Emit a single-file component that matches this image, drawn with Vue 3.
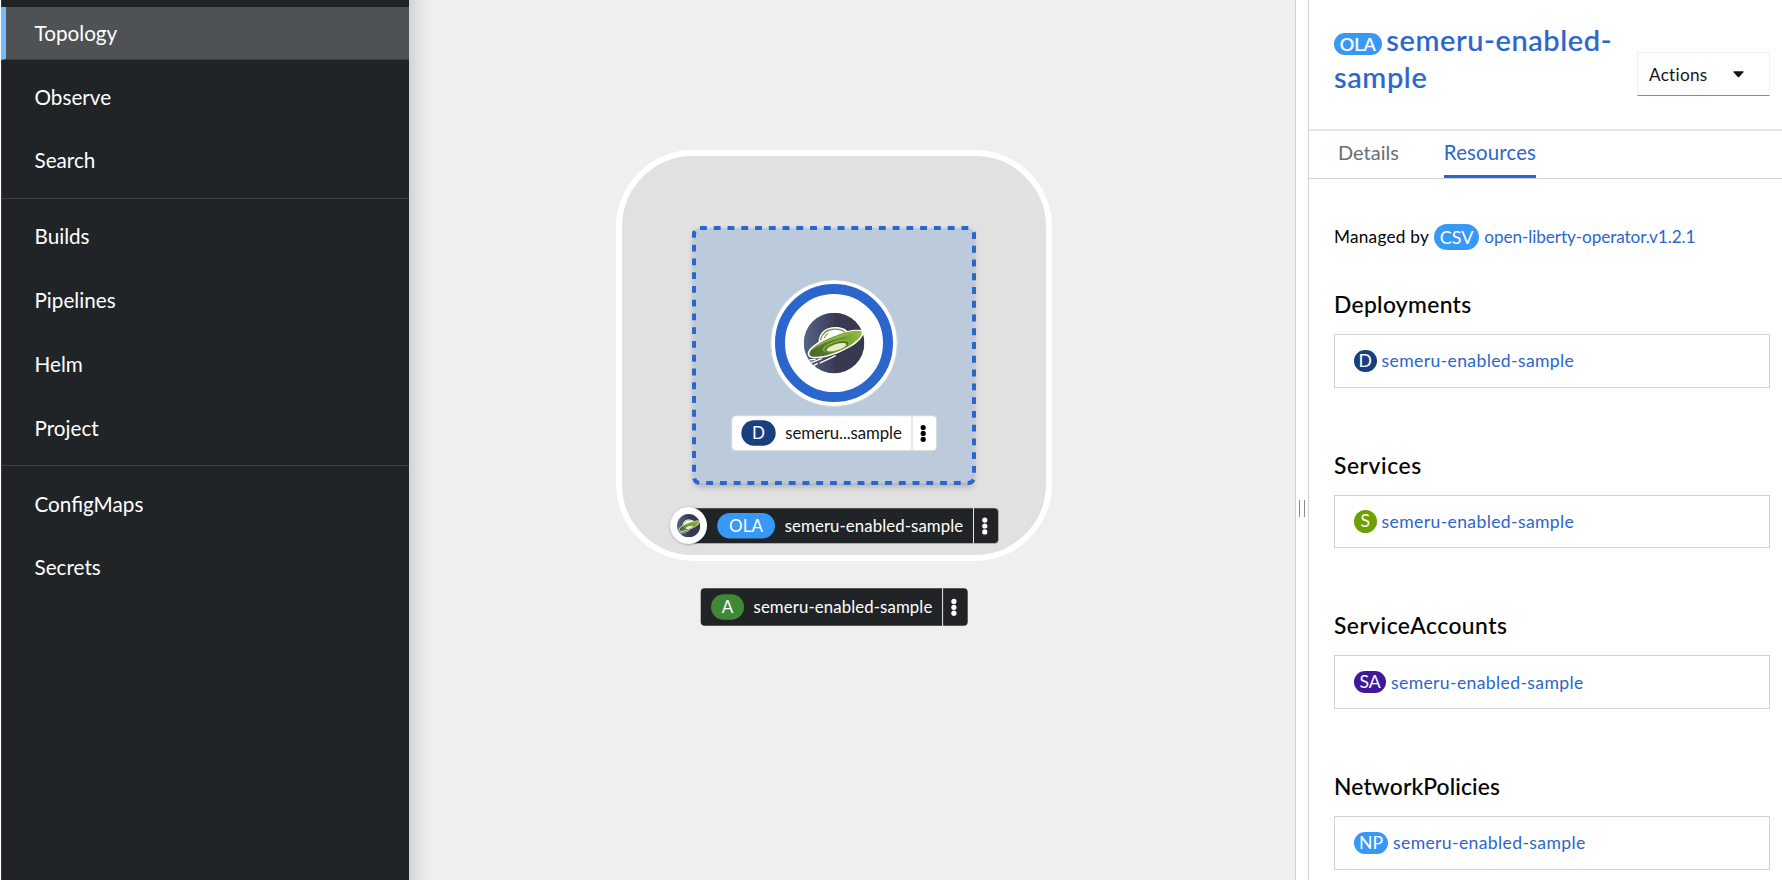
<script setup>
const navSections = [
  [{ label: 'Topology', active: true }, { label: 'Observe' }, { label: 'Search' }],
  [{ label: 'Builds' }, { label: 'Pipelines' }, { label: 'Helm' }, { label: 'Project' }],
  [{ label: 'ConfigMaps' }, { label: 'Secrets' }],
]

const resources = [
  { title: 'Deployments', badge: 'D', kind: 'deployment' },
  { title: 'Services', badge: 'S', kind: 'service' },
  { title: 'ServiceAccounts', badge: 'SA', kind: 'account' },
  { title: 'NetworkPolicies', badge: 'NP', kind: 'policy' },
]
</script>

<template>
  <div class="app">
    <nav class="sidebar">
      <ul v-for="(section, i) in navSections" :key="i" class="nav-section">
        <li v-for="item in section" :key="item.label" class="nav-item" :class="{ active: item.active }">
          {{ item.label }}
        </li>
      </ul>
    </nav>

    <main class="canvas">
      <svg class="graph" width="886" height="880" viewBox="409 0 886 880">
        <defs>
          <linearGradient id="sky" x1="0" x2="1" y1="0" y2="0">
            <stop offset="0" stop-color="#566483" />
            <stop offset="0.48" stop-color="#3c3e5a" />
            <stop offset="0.52" stop-color="#373852" />
            <stop offset="1" stop-color="#373852" />
          </linearGradient>
          <linearGradient id="hull" x1="0" x2="1" y1="0.6" y2="0.4">
            <stop offset="0" stop-color="#4a692c" />
            <stop offset="0.45" stop-color="#5d822f" />
            <stop offset="1" stop-color="#8fbd3b" />
          </linearGradient>
          <clipPath id="disc"><circle cx="91" cy="91" r="91" /></clipPath>
          <filter id="soft" x="-10%" y="-10%" width="120%" height="125%">
            <feDropShadow dx="0" dy="4" stdDeviation="3" flood-color="#030303" flood-opacity="0.22" />
          </filter>
          <filter id="lift" x="-20%" y="-20%" width="140%" height="140%">
            <feDropShadow dx="0" dy="0.5" stdDeviation="0.8" flood-color="#030303" flood-opacity="0.35" />
          </filter>
          <symbol id="ufo" viewBox="0 0 182 182">
            <circle cx="91" cy="91" r="91" fill="url(#sky)" />
            <g clip-path="url(#disc)" stroke="#fff" stroke-width="4" fill="none">
              <path d="M10 143 L36 139 M18 151 L54 138 M27 160 L42 152 M48 151 L96 129" />
            </g>
            <path d="M44 88 C46 58 68 43 94 43 C113 43 126 49 131 55 C150 50 172 49 178 55 C184 66 168 86 145 100
                     C116 117 82 132 52 136 C27 139 12 134 12 124 C12 111 25 101 44 88 Z" fill="#fff" />
            <path d="M50 82 C56 59 73 49 94 49 C110 49 121 54 125 61" fill="none" stroke="#6f9632" stroke-width="3.5" />
            <path d="M62 76 C64 69 67 66 72 62" fill="none" stroke="#6f9632" stroke-width="3.5" />
            <path d="M17 122 C21 104 60 82 96 69 C130 56 168 50 174 58 C177 69 158 87 138 99
                     C108 116 76 128 49 131 C28 134 16 131 17 122 Z" fill="url(#hull)" />
            <path d="M20 114 C34 97 67 82 96 71 C130 58 160 54 172 59 C148 60 121 70 97 78 C66 88 38 101 20 114 Z"
                  fill="#91b93c" />
            <ellipse cx="98" cy="100" rx="42" ry="15" transform="rotate(-17 98 100)" fill="#91b93c" />
            <ellipse cx="98" cy="101.5" rx="38" ry="13" transform="rotate(-17 98 101.5)" fill="#56782d" />
            <ellipse cx="98" cy="103.5" rx="31" ry="9.5" transform="rotate(-17 98 103.5)" fill="#e9ecc3" />
          </symbol>
          <g id="kebab">
            <circle cy="-5.9" r="2.6" />
            <circle r="2.6" />
            <circle cy="5.9" r="2.6" />
          </g>
        </defs>

        <!-- operator-backed group -->
        <rect x="619" y="153" width="430" height="405" rx="74" fill="#e1e1e1" stroke="#fff" stroke-width="6" />

        <!-- application node -->
        <g>
          <rect x="694" y="228" width="280" height="255" rx="6" fill="#bccbdb" filter="url(#soft)" />
          <rect x="694" y="228" width="280" height="255" rx="6" fill="#bccbdb" stroke="#2b66cc" stroke-width="4"
                stroke-dasharray="6.88 6.88" />
          <circle cx="834" cy="343.2" r="63.3" fill="#fff" stroke="#d2d2d2" stroke-width="0.8" />
          <circle cx="834" cy="343" r="54" fill="#fff" stroke="#2b66cc" stroke-width="10" />
          <use href="#ufo" x="803.7" y="312.7" width="60.7" height="60.7" />
          <rect x="731.7" y="415.7" width="205" height="35" rx="4" fill="#fff" stroke="#d6d6d6" />
          <path d="M912 416 V450" stroke="#e2e2e2" stroke-width="1.5" />
          <rect x="741.3" y="420.3" width="34.4" height="25.4" rx="12.7" fill="#183f80" />
          <text class="badge-text" x="758.5" y="439">D</text>
          <text class="label" x="785.3" y="439.3" textLength="116.5" fill="#151515">semeru...sample</text>
          <use href="#kebab" x="923.2" y="433.4" fill="#030303" />
        </g>

        <!-- group label -->
        <g>
          <rect x="683" y="508" width="315.5" height="35.5" rx="4" fill="#212427" stroke="#c8c8c8" stroke-width="0.6" />
          <path d="M973.5 508 V543.5" stroke="#e8e8e8" />
          <rect x="717.2" y="513" width="57.8" height="25.5" rx="12.7" fill="#3799f5" />
          <text class="badge-text" x="746" y="532">OLA</text>
          <text class="label" x="784.7" y="532" textLength="178.5" fill="#fff">semeru-enabled-sample</text>
          <use href="#kebab" x="984.8" y="526" fill="#fff" />
          <circle cx="688.6" cy="525.6" r="18.4" fill="#fff" filter="url(#lift)" />
          <use href="#ufo" x="677" y="514" width="23.3" height="23.3" />
        </g>

        <!-- application grouping label -->
        <g>
          <rect x="700.7" y="588.2" width="267" height="37.5" rx="4" fill="#212427" />
          <path d="M942.6 588 V626" stroke="#e8e8e8" />
          <rect x="711" y="594.2" width="33" height="25.5" rx="12.7" fill="#3f8836" />
          <text class="badge-text" x="727.5" y="613.3">A</text>
          <text class="label" x="753.5" y="613.3" textLength="178.8" fill="#fff">semeru-enabled-sample</text>
          <use href="#kebab" x="953.9" y="607.3" fill="#fff" />
        </g>
      </svg>
    </main>

    <div class="splitter"><span class="grip"></span></div>

    <aside class="panel">
      <header class="panel-head">
        <h1 class="title"><span class="badge badge-title">OLA</span>semeru-enabled-<br />sample</h1>
        <button class="actions">
          Actions
          <svg width="11" height="7" viewBox="0 0 11 7">
            <path d="M0.9 0.3 H10.1 Q11 0.6 10.4 1.3 L6.2 5.9 Q5.5 6.5 4.8 5.9 L0.6 1.3 Q0 0.6 0.9 0.3 Z" fill="#151515" />
          </svg>
        </button>
      </header>
      <div class="tabs">
        <span class="tab tab-details">Details</span>
        <span class="tab tab-resources">Resources</span>
      </div>
      <div class="panel-body">
        <p class="managed">
          <span class="managed-by">Managed by</span><span class="badge badge-csv">CSV</span><a class="csv-link">open-liberty-operator.v1.2.1</a>
        </p>
        <section v-for="r in resources" :key="r.title" class="resource">
          <h2 :class="'heading-' + r.kind">{{ r.title }}</h2>
          <div class="card">
            <span class="badge" :class="r.kind">{{ r.badge }}</span><a class="link">semeru-enabled-sample</a>
          </div>
        </section>
      </div>
    </aside>
  </div>
</template>

<style>
body {
  overflow: hidden;
  background: #fff;
}
</style>

<style scoped>
.app {
  display: flex;
  width: 1782px;
  height: 880px;
  overflow: hidden;
  background: #fff;
  font-family: Lato, "Liberation Sans", sans-serif;
  color: #030303;
}

.sidebar {
  flex: none;
  box-sizing: border-box;
  width: 408px;
  margin-left: 1px;
  padding-top: 7px;
  background: #212427;
  border-left: 1px solid #34383b;
}

.nav-section {
  display: flex;
  flex-direction: column;
  gap: 10.7px;
  margin: 0 0 0 -1px;
  padding: 0 0 10.8px;
  list-style: none;
  border-bottom: 1px solid #3c3f42;
}

.nav-section + .nav-section {
  padding-top: 11.3px;
}

.nav-section:last-child {
  border-bottom: 0;
}

.nav-item {
  box-sizing: border-box;
  height: 53px;
  padding-left: 33.5px;
  color: #fff;
  font-size: 20.7px;
  line-height: 52.4px;
}

.nav-item.active {
  padding-left: 28.5px;
  background: #4f5255;
  border-left: 5px solid #73bcf7;
  border-bottom: 1px solid #3c3f42;
}

.canvas {
  flex: none;
  width: 886px;
  background: linear-gradient(90deg, #d2d2d2, #e0e0e0 8px, #ebebeb 16px, #efefef 23px);
}

.graph {
  display: block;
}

.label {
  font-size: 16.8px;
}

.badge-text {
  fill: #fff;
  font-size: 17px;
  text-anchor: middle;
}

.splitter {
  display: flex;
  flex: none;
  box-sizing: border-box;
  align-items: center;
  justify-content: center;
  width: 14px;
  padding-top: 137px;
  border-left: 1px solid #d2d2d2;
  border-right: 1px solid #d2d2d2;
}

.grip {
  width: 4px;
  height: 17px;
  border-left: 1px solid #8a8d90;
  border-right: 1px solid #8a8d90;
}

.panel {
  flex: 1;
  min-width: 0;
  background: #fff;
}

.panel-head {
  display: flex;
  box-sizing: border-box;
  align-items: flex-start;
  justify-content: space-between;
  height: 131px;
  padding: 22px 12px 0 25px;
  border-bottom: 2px solid #e8e8e8;
}

.title {
  margin: 0;
  color: #2b66cc;
  font-size: 29px;
  font-weight: 500;
  letter-spacing: 0.62px;
  line-height: 36.5px;
  white-space: nowrap;
  -webkit-text-stroke: 0.2px currentColor;
}

.badge {
  display: inline-flex;
  flex: none;
  box-sizing: border-box;
  align-items: center;
  justify-content: center;
  height: 22.6px;
  border-radius: 12px;
  background: #3799f5;
  color: #fff;
  font-size: 17.6px;
  letter-spacing: 0;
  line-height: 22px;
}

.badge-title {
  position: relative;
  top: 1px;
  width: 47.6px;
  margin-right: 4.6px;
  font-size: 18px;
  vertical-align: 1px;
}

.badge-csv {
  width: 45px;
  height: 26px;
  margin: 0 5.3px 0 5px;
  border-radius: 13px;
  font-size: 18px;
}

.deployment {
  width: 22.6px;
  background: #183f80;
}

.service {
  width: 22.6px;
  background: #6ca100;
}

.account {
  width: 32px;
  background: #40199a;
}

.policy {
  width: 34px;
}

.actions {
  display: flex;
  box-sizing: border-box;
  align-items: center;
  justify-content: space-between;
  width: 133px;
  height: 44px;
  margin-top: 30px;
  padding: 1px 25px 1px 11px;
  border: 1px solid #f0f0f0;
  border-bottom-color: #8a8d90;
  background: #fff;
  color: #151515;
  font-family: inherit;
  font-size: 17.2px;
  letter-spacing: 0.25px;
}

.tabs {
  display: flex;
  box-sizing: border-box;
  height: 48px;
  padding-left: 29px;
  border-bottom: 1px solid #d2d2d2;
}

.tab {
  box-sizing: border-box;
  height: 47px;
  font-size: 20px;
  line-height: 43px;
}

.tab-details {
  color: #6a6e73;
}

.tab-resources {
  margin-left: 45px;
  color: #2b66cc;
  border-bottom: 3px solid #2b66cc;
  font-size: 20.4px;
  letter-spacing: 0.16px;
}

.panel-body {
  padding: 45px 12px 0 25px;
}

.managed {
  display: flex;
  align-items: center;
  height: 26px;
  margin: 0;
  font-size: 17.2px;
}

.managed-by,
.csv-link {
  padding-bottom: 1px;
}

.managed-by {
  letter-spacing: 0.25px;
}

.csv-link {
  color: #2b66cc;
  letter-spacing: -0.1px;
}

.resource {
  height: 160.7px;
}

.resource:first-of-type {
  margin-top: 36px;
}

h2 {
  height: 38px;
  margin: 0;
  padding-top: 4px;
  box-sizing: border-box;
  margin-bottom: 10px;
  font-size: 22.8px;
  font-weight: 500;
  letter-spacing: 0.35px;
  line-height: 28px;
  -webkit-text-stroke: 0.1px currentColor;
}

.heading-service {
  letter-spacing: 0.6px;
}

.heading-account {
  letter-spacing: 0.5px;
}

.heading-policy {
  letter-spacing: 0.15px;
}

.card {
  display: flex;
  box-sizing: border-box;
  align-items: center;
  height: 53.6px;
  padding-left: 19px;
  border: 1px solid #d2d2d2;
}

.link {
  margin-left: 5px;
  color: #2b66cc;
  font-size: 17.6px;
  letter-spacing: 0.36px;
}
</style>
